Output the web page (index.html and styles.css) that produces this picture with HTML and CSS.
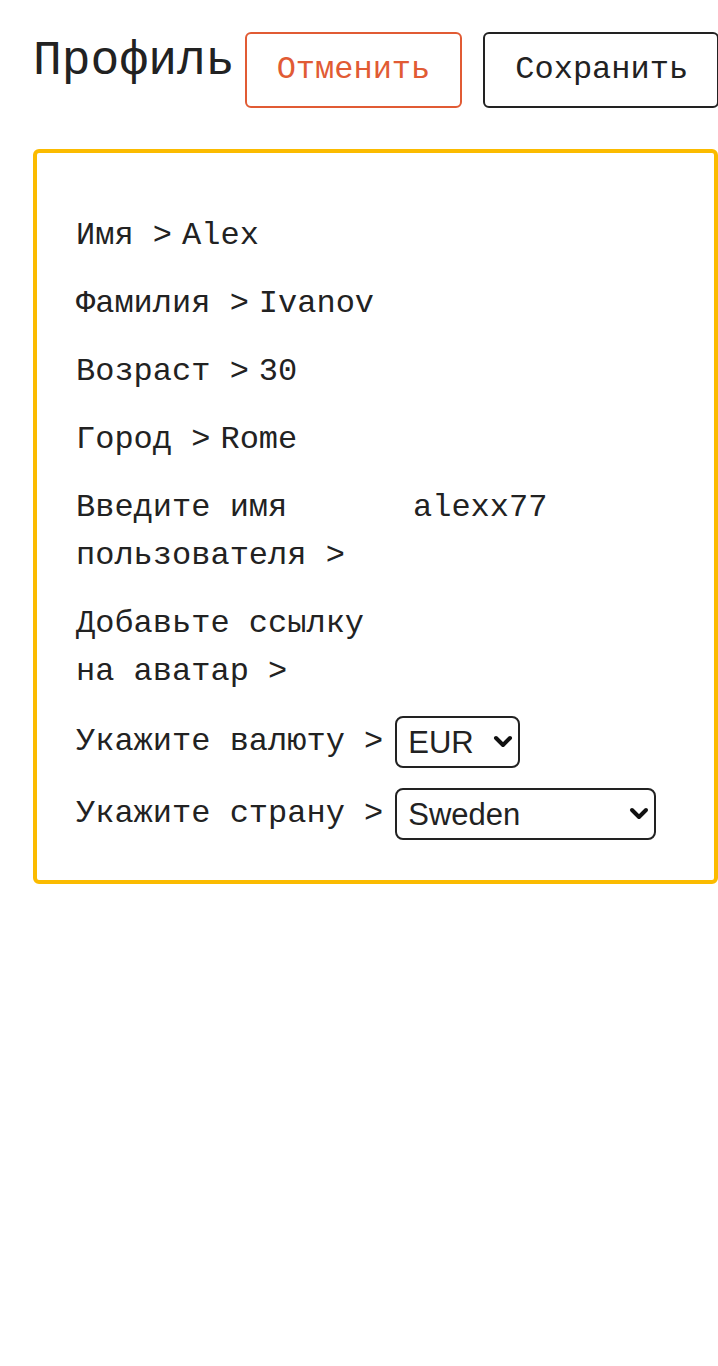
FILE: index.html
```html
<!DOCTYPE html>
<html lang="ru">
<head>
  <meta charset="UTF-8">
  <title>Профиль</title>
  <link rel="stylesheet" href="styles.css">
</head>
<body>

  <div class="page">
    <!-- шапка -->
    <div class="header">
      <h1 class="title">Профиль</h1>
      <button class="btn btn-cancel" type="button">Отменить</button>
      <button class="btn btn-save" type="button">Сохранить</button>
    </div>

    <!-- карточка профиля -->
    <div class="card">
      <div class="row">
        <span class="label">Имя &gt;</span>
        <span class="value">Alex</span>
      </div>
      <div class="row">
        <span class="label">Фамилия &gt;</span>
        <span class="value">Ivanov</span>
      </div>
      <div class="row">
        <span class="label">Возраст &gt;</span>
        <span class="value">30</span>
      </div>
      <div class="row">
        <span class="label">Город &gt;</span>
        <span class="value">Rome</span>
      </div>
      <div class="row">
        <span class="label label-wrap">Введите имя пользователя &gt;</span>
        <span class="value value-far">alexx77</span>
      </div>
      <div class="row">
        <span class="label label-wrap">Добавьте ссылку на аватар &gt;</span>
      </div>
      <div class="row row-select">
        <span class="label">Укажите валюту &gt;</span>
        <span class="select-box">
          <select class="select select-currency">
            <option>EUR</option>
            <option>USD</option>
            <option>RUB</option>
          </select>
          <svg class="chevron" width="20" height="14" viewBox="0 0 20 14"><path d="M3 3 L10 10 L17 3" fill="none" stroke="#111" stroke-width="4" stroke-linecap="round" stroke-linejoin="round"/></svg>
        </span>
      </div>
      <div class="row row-select">
        <span class="label">Укажите страну &gt;</span>
        <span class="select-box">
          <select class="select select-country">
            <option>Sweden</option>
            <option>Italy</option>
            <option>Russia</option>
          </select>
          <svg class="chevron" width="20" height="14" viewBox="0 0 20 14"><path d="M3 3 L10 10 L17 3" fill="none" stroke="#111" stroke-width="4" stroke-linecap="round" stroke-linejoin="round"/></svg>
        </span>
      </div>
    </div>
  </div>

</body>
</html>
```

FILE: styles.css
```css
/* ====== Профиль ====== */
body {
  margin: 0;
  background: #fff;
  color: #222;
  font-family: "Liberation Mono", monospace;
}
.page {
  width: 685px;
  padding: 32px 0 0 33px;
}
.header {
  display: flex;
  align-items: flex-start;
}
.title {
  margin: 0 10px 0 0;
  font-size: 48px;
  font-weight: normal;
  line-height: 52px;
  padding-top: 3px;
}
.btn {
  font-family: "Liberation Mono", monospace;
  font-size: 32px;
  line-height: 48px;
  padding: 12px 30px;
  background: #fff;
  border: 2px solid #222;
  border-radius: 6px;
  cursor: pointer;
}
.btn-cancel {
  color: #e15b34;
  border-color: #e15b34;
  width: 218px;
}
.btn-save {
  color: #222;
  margin-left: 21px;
  width: 236px;
}
.card {
  margin-top: 41px;
  border: 4px solid #fbbb00;
  border-radius: 6px;
  padding: 59px 40px 40px 39px;
}
.row {
  display: flex;
  align-items: flex-start;
  gap: 10px;
  font-size: 32px;
  line-height: 48px;
  margin-top: 20px;
}
.row:first-child {
  margin-top: 0;
}
.row-select {
  align-items: center;
}
.label-wrap {
  max-width: 327px;
}
.select-box {
  position: relative;
  display: inline-block;
  margin-left: 2px;
  height: 52px;
}
.select {
  appearance: none;
  -webkit-appearance: none;
  font-family: "Liberation Sans", sans-serif;
  font-size: 31px;
  color: #222;
  background: #fff;
  border: 2px solid #222;
  border-radius: 8px;
  height: 52px;
  padding: 0 11px;
}
.select-currency {
  width: 125px;
}
.select-country {
  width: 261px;
}
.chevron {
  position: absolute;
  right: 7px;
  top: 19px;
  pointer-events: none;
}
```
